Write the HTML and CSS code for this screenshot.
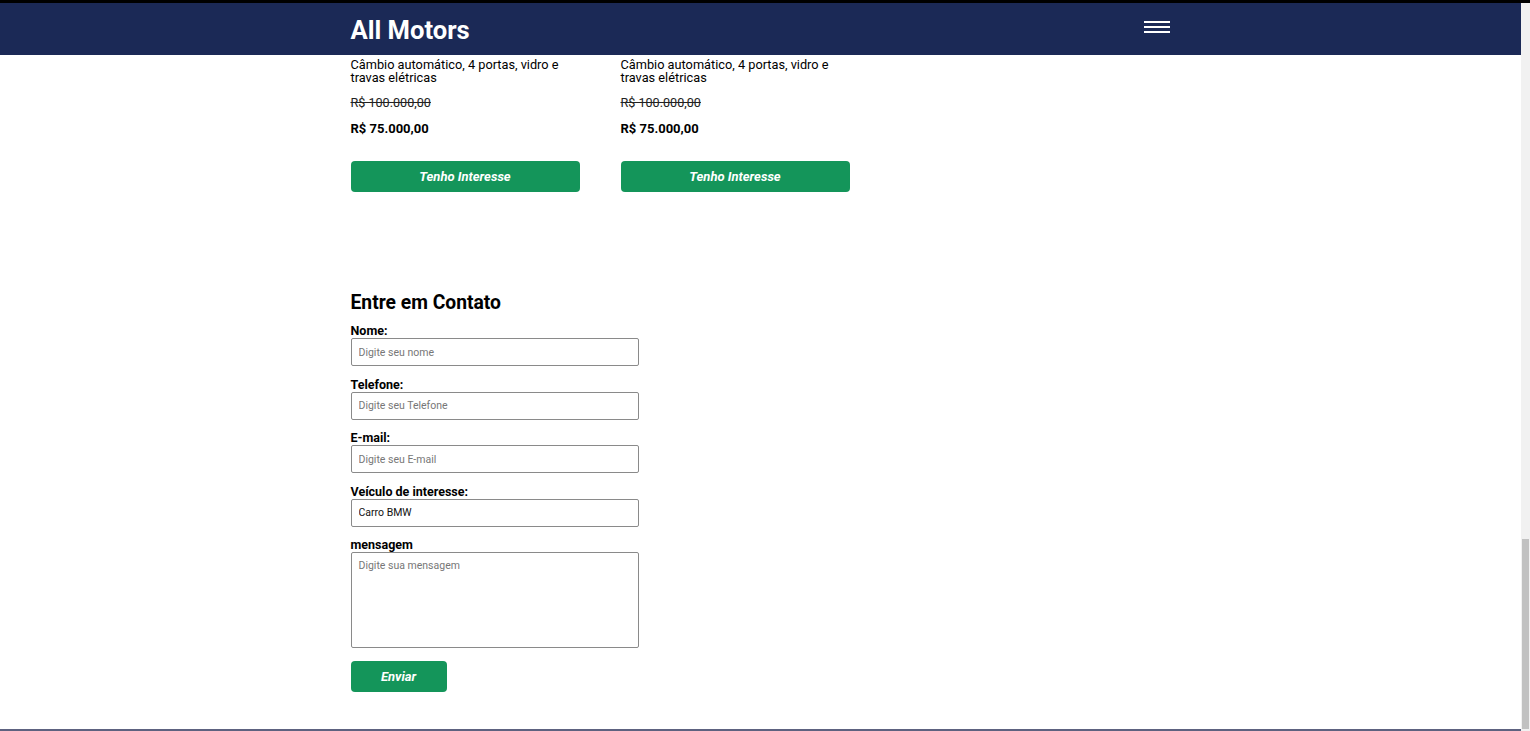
FILE: index.html
```html
<!DOCTYPE html>
<html lang="pt-BR">
<head>
<meta charset="utf-8">
<title>All Motors</title>
<link rel="stylesheet" href="styles.css">
</head>
<body>
<div class="topstrip"></div>
<div class="viewport">
  <div class="page">
    <header class="header">
      <div class="container header-inner">
        <h1 class="logo">All Motors</h1>
        <button class="menu" aria-label="Menu">
          <span></span><span></span><span></span>
        </button>
      </div>
    </header>
    <main class="main">
      <div class="container">
        <section class="cards">
          <article class="card">
            <p class="card-desc">Câmbio automático, 4 portas, vidro e travas elétricas</p>
            <p class="price-old">R$ 100.000,00</p>
            <p class="price-new">R$ 75.000,00</p>
            <button class="btn btn-card">Tenho Interesse</button>
          </article>
          <article class="card">
            <p class="card-desc">Câmbio automático, 4 portas, vidro e travas elétricas</p>
            <p class="price-old">R$ 100.000,00</p>
            <p class="price-new">R$ 75.000,00</p>
            <button class="btn btn-card">Tenho Interesse</button>
          </article>
        </section>
        <section class="contact">
          <h2 class="contact-title">Entre em Contato</h2>
          <form class="form">
            <div class="field">
              <label class="label" for="nome">Nome:</label>
              <input class="input" id="nome" type="text" placeholder="Digite seu nome">
            </div>
            <div class="field">
              <label class="label" for="tel">Telefone:</label>
              <input class="input" id="tel" type="text" placeholder="Digite seu Telefone">
            </div>
            <div class="field">
              <label class="label" for="email">E-mail:</label>
              <input class="input" id="email" type="text" placeholder="Digite seu E-mail">
            </div>
            <div class="field">
              <label class="label" for="veiculo">Veículo de interesse:</label>
              <input class="input" id="veiculo" type="text" value="Carro BMW">
            </div>
            <div class="field">
              <label class="label" for="msg">mensagem</label>
              <textarea class="input textarea" id="msg" placeholder="Digite sua mensagem"></textarea>
            </div>
            <button class="btn btn-send" type="button">Enviar</button>
          </form>
        </section>
      </div>
    </main>
    <footer class="footer"></footer>
  </div>
  <div class="scrollbar"><div class="scroll-arrow"></div><div class="scroll-thumb"></div></div>
</div>
</body>
</html>
```

FILE: styles.css
```css
* { box-sizing: border-box; }
html, body { margin: 0; padding: 0; }
body {
  height: 731px;
  overflow: hidden;
  background: #ffffff;
  font-family: Roboto, "Liberation Sans", Arial, sans-serif;
  color: #000;
  display: flex;
  flex-direction: column;
}
.topstrip { height: 3px; background: #000; flex: none; }
.viewport { flex: 1; display: flex; min-height: 0; }
.page { flex: 1; display: flex; flex-direction: column; min-width: 0; }
.container { width: 820px; margin: 0 auto; }

.header { background: #1b2956; height: 52px; flex: none; }
.header-inner { height: 100%; display: flex; align-items: center; justify-content: space-between; }
.logo { margin: 0; color: #fff; font-size: 25.6px; font-weight: 700; line-height: 52px; padding-top: 2px; }
.menu {
  background: none; border: 0; padding: 0; width: 26px; height: 12px;
  display: flex; flex-direction: column; justify-content: space-between;
  margin-top: -5px; margin-right: 1px; cursor: pointer;
}
.menu span { display: block; height: 2px; background: #fff; }

.main { flex: 1; }
.cards { display: flex; gap: 41px; }
.card { width: 229px; }
.card-desc { margin: 3px 0 0; font-size: 12.75px; line-height: 13px; }
.price-old { margin: 11px 0 0; font-size: 12.6px; line-height: 16px; text-decoration: line-through; color: #222; }
.price-new { margin: 10px 0 0; font-size: 13px; line-height: 16px; font-weight: 700; }
.btn {
  background: #14955a; color: #fff; border: 0; border-radius: 4px;
  font-family: Roboto, "Liberation Sans", Arial, sans-serif;
  font-style: italic; font-weight: 700; font-size: 13px; cursor: pointer;
}
.btn-card { display: block; width: 229px; height: 31px; margin-top: 24px; }

.contact { margin-top: 99px; }
.contact-title { margin: 0 0 8px; font-size: 19.3px; line-height: 24px; font-weight: 700; }
.form { display: flex; flex-direction: column; }
.field { display: flex; flex-direction: column; margin-bottom: 10.5px; }
.label { font-size: 12.5px; font-weight: 700; line-height: 15px; }
.input {
  width: 288px; height: 28px; border: 1px solid #8a8a8a; border-radius: 2px;
  padding: 0 7px; font-family: Roboto, "Liberation Sans", Arial, sans-serif; font-size: 10.5px; color: #111;
  background: #fff;
}
.input::placeholder { color: #777; }
.textarea { height: 96px; padding: 6px 7px; resize: none; display: block; }
.field:last-of-type { margin-bottom: 13px; }
.btn-send { width: 96px; height: 31px; font-size: 13px; }

.footer { height: 2px; background: #5d6280; flex: none; }

.scrollbar { width: 9px; background: #f1f1f1; display: flex; flex-direction: column; flex: none; }
.scroll-arrow { height: 10px; }
.scroll-thumb { margin-top: auto; height: 190px; background: #c1c1c1; margin-left: 1px; margin-right: 1px; margin-bottom: 2px; }
```
